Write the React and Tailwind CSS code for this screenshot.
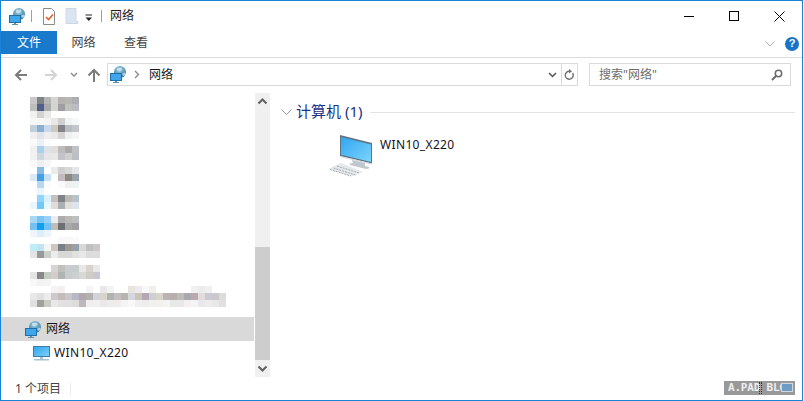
import React from "react";

const MOSAIC = [
  [97, 0, "c8c8c8 7f8385 b5b7b6 d5d5d5 b5b1b1 b8b8b2 adadb3"],
  [104, 0, "bdbdbd 525f8a a8aaac d4d4d2 a09ea0 c0c1bc bbbbc4"],
  [111, 0, "f1f1f1 d2d3ce e9e9e5"],
  [118, 0, "f7f7f7 f6f6f6 f4f4f4 e9e8e6 cfcfcf f0f3f3 f6f8f8"],
  [125, 0, "bfcfdc 8aafd0 cad7ec cdc8c0 858385 b6bcbf c3c5cb"],
  [132, 0, "efefef e0e4ea eeeeef ebe9e8 d6d5d6 eef0f1 f4f5f5"],
  [139, 0, "fafafa eaf0f6 fafbfc"],
  [146, 0, "f1f1f1 a6d2ee dde2e6 e2dfdb bdbdbd ada9a7 bcc2c6"],
  [153, 0, "f1f1f1 ced6e0 e5e7ea e9e8e5 c3c4c7 d0cfcd b9bfc2"],
  [160, 0, "f9f9f9 f0f0f0 f6f6f6"],
  [167, 0, "ffffff 85bde9 ffffff ebebeb cfcfcf d8d8d8 e6e6e8"],
  [174, 0, "dce9f8 40a0e8 c8e0f4 ffffff c3babf 8d8880 9aa4ae"],
  [181, 0, "ffffff b8d8f0 fcfcfc ffffff fafafa f2f0ef eff2f3"],
  [188, 0, "ffffff e8f5fd"],
  [195, 0, "ffffff 90d4ff d8f0fc c8c0bc 7e8488 bdb8b2 b8c4cc"],
  [202, 0, "e8f6fe 70c8fc e8f6fe e0dcd8 acb0b4 e2ded8 dce4ec"],
  [216, 0, "a8d8f4 78c4f4 98d0f8 ececec acacac bcb8b4 bcc0c0"],
  [223, 0, "78c0f4 10a0f0 70c0f4 c4bcb4 6c7074 a8a8a8 a0a0a4"],
  [230, 0, "eef6fc dceef6 eaf4fa"],
  [237, 4, "f8f8f8 f8f8f8 fafafa"],
  [244, 0, "c0ecf8 c0e4f0 f4f4f4 d0c8c0 788088 a0988c 98a0ac d8d8d8 c0c0c0 ccc8c8 ffffff fcffff"],
  [251, 0, "e4e4e4 989898 c8d0c8 ececec d8d8d4 d8d8d4 e0e0dc e8e8e8 dcdcdc dcdcdc"],
  [265, 3, "d8d4d4 c0c0bc c8cccc c8cccc e8e8e8 d8d4cc e8e8e8"],
  [272, 0, "e4e4e4 888888 c4ccc4 d4ccc8 b0b4b4 c8cccc ccd0d0 d8d8d8 d0ccc4 c8c8d4"],
  [279, 0, "f8f8f8 f2f2f2 f4f4f4"],
  [286, 3, "f4f4f4 f4f0f0 ffffff ffffff ffffff f4f4f4 ffffff e8e8e8 f4f4f4 ffffff ffffff e8e4e0 eeeaee f8f8f8 f0f0e8 ffffff ffffff ffffff ffffff ffffff f0f0f0 ececec f0f0f0"],
  [293, 0, "e8e8e8 e0e0e0 ececec ccc8cc c4bcbc c8c8c8 b8b8c4 b0a8ac b4b0b0 d0d4d8 d8d4cc b0b4b0 c4c0c0 b8b4b0 d4d8dc c8c4b8 b4a8b4 ccd0d4 d8d4cc bcb4b4 b8b0b0 bcbcb8 aca8b0 bca8b0 e4dcdc c8ccd0 ccc8cc dcdcdc"],
  [300, 0, "e0e0e0 a0a0a0 c8ccc4 e8e8e8 e4e0e0 e0e0e4 e0dcdc bcb8bc eeeeee f0f0f0 e8e8e8 ececec f0ecec f4f4f4 f8f8f8 f0f0f0 f0ecec f0f0f0 f4f0ec f4f4f4 e8e8e8 e8e8e8 f4f0f0 f4f4f4 e8e8ec ececec e8e8e8 e0e0e0"],
];

function Mosaic() {
  return (
    <svg width="200" height="213" viewBox="30 97 200 213" shapeRendering="crispEdges" className="block">
      {MOSAIC.flatMap(([y, start, cols]) =>
        cols.split(" ").map((c, i) => (
          <rect key={`${y}-${i}`} x={30 + (start + i) * 7} y={y} width="7" height="7" fill={`#${c}`} />
        ))
      )}
    </svg>
  );
}

function NetIcon({ className = "" }) {
  return (
    <svg width="16" height="17" viewBox="0 0 16 17" className={`block shrink-0 ${className}`}>
      <defs>
        <radialGradient id="g" cx="0.45" cy="0.3" r="0.8">
          <stop offset="0" stopColor="#9fd0e6" />
          <stop offset="1" stopColor="#2a6f96" />
        </radialGradient>
      </defs>
      <circle cx="10" cy="6" r="6" fill="url(#g)" />
      <path d="M7 1.500c1.500 1 3 .5 4.500 0l1 2-3 2-2.500-1zM12 8l3-1.500.8 1.500-2 2z" fill="#d6e8ef" opacity="0.75" />
      <rect x="0.500" y="7.500" width="11" height="7" fill="#3fa6ea" stroke="#1f6fa8" />
      <rect x="5" y="15" width="2" height="1" fill="#5d8fb0" />
      <rect x="3" y="16" width="6" height="1" fill="#5d8fb0" />
    </svg>
  );
}

function Nav({ d, color }) {
  return (
    <svg width="16" height="16" viewBox="0 0 16 16" className="block shrink-0">
      <path d={d} fill="none" stroke={color} strokeWidth="2" />
    </svg>
  );
}

function Chevron({ up }) {
  return (
    <svg width="15" height="17" viewBox="0 0 15 17" className="block">
      <path d={up ? "M3.500 10.500l4-4 4 4" : "M3.500 6.500l4 4 4-4"} fill="none" stroke="#606060" strokeWidth="2" />
    </svg>
  );
}

export default function App() {
  const font = "font-['Noto_Sans','Noto_Sans_CJK_SC',sans-serif]";
  return (
    <div className={`w-[803px] h-[401px] bg-white border border-[#1883d7] flex flex-col overflow-hidden text-[12px] text-[#1a1a1a] ${font}`}>
      {/* title bar */}
      <div className="h-[30px] flex items-center shrink-0">
        <NetIcon className="ml-[8px]" />
        <div className="ml-[6px] w-px h-[12px] bg-[#a0a0a0]" />
        <svg width="14" height="17" viewBox="0 0 14 17" className="block ml-[10px]">
          <path d="M1.500 0.500h8l3 3v13h-11z" fill="#fff" stroke="#8a8a8a" />
          <path d="M4 9l2.500 2.500L11 6.500" fill="none" stroke="#e2622a" strokeWidth="1.600" />
        </svg>
        <svg width="14" height="16" viewBox="0 0 14 16" className="block ml-[9px]">
          <path d="M1 0.500h10v13h2v2H1z" fill="#dbe5f2" stroke="#cdd8e6" />
        </svg>
        <svg width="8" height="8" viewBox="0 0 8 8" className="block ml-[6px] mt-[3px]">
          <path d="M0.500 1h6.500" stroke="#222" />
          <path d="M0.500 3.500h6.500L3.800 7z" fill="#222" />
        </svg>
        <div className="ml-[8px] w-px h-[12px] bg-[#a0a0a0]" />
        <span className="ml-[8px] leading-[30px]">网络</span>
        <div className="ml-auto flex items-center h-full">
          <div className="w-[46px] flex justify-center">
            <div className="w-[10px] h-px bg-black" />
          </div>
          <div className="w-[46px] flex justify-center pr-[2px]">
            <div className="w-[10px] h-[10px] border border-black" />
          </div>
          <div className="w-[44px] flex justify-center pr-[2px]">
            <svg width="11" height="11" viewBox="0 0 11 11" className="block">
              <path d="M0.500 0.500l10 10M10.500 0.500l-10 10" stroke="#000" strokeWidth="1" />
            </svg>
          </div>
        </div>
      </div>

      {/* ribbon tabs */}
      <div className="h-[27px] flex items-start border-b border-[#dadbdc] shrink-0">
        <div className="w-[56px] h-[23px] pt-[1px] bg-[#1979ca] text-white flex items-center justify-center">文件</div>
        <div className="w-[53px] h-[23px] pt-[1px] flex items-center justify-center text-[#444]">网络</div>
        <div className="w-[52px] h-[23px] pt-[1px] flex items-center justify-center text-[#444]">查看</div>
        <div className="ml-auto flex items-center h-[23px] pt-[2px]">
          <svg width="10" height="6" viewBox="0 0 10 6" className="block">
            <path d="M0.500 0.500l4.500 4.500 4.500-4.500" fill="none" stroke="#b0b0b0" />
          </svg>
          <div className="w-[14px] h-[14px] mr-[3px] ml-[10px] rounded-full bg-[#1874c8] text-white text-[11px] font-bold flex items-center justify-center leading-none font-['Liberation_Sans',sans-serif]">?</div>
        </div>
      </div>

      {/* address row */}
      <div className="h-[35px] flex items-start pt-[5px] shrink-0">
        <div className="w-[106px] flex items-center pl-[12px] h-[23px]">
          <Nav color="#7b7b7b" d="M14 8H3M8 3L3 8l5 5" />
          <div className="ml-[14px]"><Nav color="#d4d4d4" d="M2 8h11M8 3l5 5-5 5" /></div>
          <svg width="8" height="6" viewBox="0 0 8 6" className="block ml-[11px]">
            <path d="M1 1l3 3 3-3" fill="none" stroke="#8a8a8a" strokeWidth="1.400" />
          </svg>
          <div className="ml-[8px]"><Nav color="#7b7b7b" d="M8 15V3M2.500 8.500L8 3l5.500 5.500" /></div>
        </div>
        <div className="w-[471px] h-[23px] border border-[#d9d9d9] flex items-center">
          <NetIcon className="ml-[2px]" />
          <svg width="6" height="9" viewBox="0 0 6 9" className="block ml-[8px]">
            <path d="M1 1l3.500 3.500L1 8" fill="none" stroke="#8a8a8a" strokeWidth="1.400" />
          </svg>
          <span className="ml-[9px] leading-none">网络</span>
          <div className="ml-auto flex items-center h-full">
            <svg width="9" height="6" viewBox="0 0 9 6" className="block mr-[4px]">
              <path d="M1 1l3.500 3.500L8 1" fill="none" stroke="#555" strokeWidth="1.500" />
            </svg>
            <div className="w-[16px] h-full border-l border-[#d9d9d9] flex items-center justify-center">
              <svg width="11" height="12" viewBox="0 0 11 12" className="block">
                <path d="M8.600 4a4 4 0 1 1-3-1.800" fill="none" stroke="#707070" strokeWidth="1.400" />
                <path d="M5 0l3 2.300L5 4.500z" fill="#707070" />
              </svg>
            </div>
          </div>
        </div>
        <div className="ml-[11px] w-[202px] h-[23px] border border-[#d9d9d9] flex items-center pl-[9px] pr-[7px] text-[#6d6d6d]">
          <span className="leading-none">搜索"网络"</span>
          <svg width="12" height="12" viewBox="0 0 12 12" className="block ml-auto">
            <circle cx="7.500" cy="4.500" r="3.200" fill="none" stroke="#6a6a6a" strokeWidth="1.500" />
            <path d="M5 7l-4 4" stroke="#6a6a6a" strokeWidth="2" />
          </svg>
        </div>
      </div>

      {/* body */}
      <div className="flex-1 min-h-0 flex">
        {/* sidebar */}
        <div className="w-[253px] shrink-0 flex flex-col">
          <div className="pl-[29px] pt-[4px] h-[224px] shrink-0 overflow-hidden">
            <Mosaic />
          </div>
          <div className="h-[24px] bg-[#d9d9d9] flex items-center pl-[24px] shrink-0">
            <NetIcon />
            <span className="ml-[5px]">网络</span>
          </div>
          <div className="h-[24px] flex items-center pl-[32px] shrink-0">
            <svg width="17" height="15" viewBox="0 0 17 15" className="block shrink-0">
              <defs>
                <linearGradient id="s" x1="0" y1="0" x2="1" y2="1">
                  <stop offset="0" stopColor="#2fa6ee" />
                  <stop offset="1" stopColor="#7fd0fa" />
                </linearGradient>
              </defs>
              <rect x="0.500" y="0.500" width="16" height="10" fill="url(#s)" stroke="#3c7ea8" />
              <rect x="7" y="11" width="3" height="2" fill="#a8c2d2" />
              <rect x="1" y="13" width="15" height="1.500" fill="#a8c2d2" />
            </svg>
            <span className="ml-[4px] tracking-[0.35px] text-[#10141c]">WIN10_X220</span>
          </div>
        </div>
        {/* scrollbar */}
        <div className="w-[15px] ml-px shrink-0 h-[284px] bg-[#f0f0f0] flex flex-col">
          <Chevron up />
          <div className="h-[137px] shrink-0" />
          <div className="flex-1 bg-[#cdcdcd]" />
          <Chevron />
        </div>
        {/* content */}
        <div className="flex-1 min-w-0 pl-[11px] pt-[10px]">
          <div className="flex items-center h-[18px]">
            <svg width="11" height="7" viewBox="0 0 11 7" className="block">
              <path d="M0.500 0.500l5 5 5-5" fill="none" stroke="#9a9a9a" />
            </svg>
            <span className="ml-[4px] -mt-[2px] text-[15px] leading-none text-[#1e3287]">计算机 (1)</span>
            <div className="ml-[8px] w-[425px] h-px bg-[#e2e2e2]" />
          </div>
          <div className="flex items-start ml-[47px] mt-[14px]">
            <svg width="44" height="44" viewBox="0 0 44 44" className="block shrink-0">
              <defs>
                <linearGradient id="m" x1="0" y1="0" x2="1" y2="1">
                  <stop offset="0" stopColor="#2ea6f2" />
                  <stop offset="1" stopColor="#7ed4fc" />
                </linearGradient>
              </defs>
              <path d="M12 0l32 8v20.500L12 21z" fill="#5f7383" />
              <path d="M13 2l30 7.500v17.500L13 19.800z" fill="url(#m)" />
              <path d="M12 21l32 7.500v1L12 22z" fill="#cfd6db" />
              <path d="M24 25l13 3v3l4 1v1.500l-3 .5-16-4v-1.500l3-.5z" fill="#c0c8cd" />
              <path d="M13 28l22 9-11 4.500-24-7.500z" fill="#e6e9ec" />
              <path d="M9 31l22 7M5.500 33l22 7M2 34.500l21 6.500" stroke="#a6abb0" strokeWidth="1" strokeDasharray="2 1" />
            </svg>
            <span className="ml-[8px] mt-[1px] tracking-[0.35px] text-[#10141c]">WIN10_X220</span>
          </div>
        </div>
      </div>

      {/* status bar */}
      <div className="h-[22px] flex items-center shrink-0 relative text-[#444]">
        <span className="ml-[14px]">1 个项目</span>
        <div className="ml-[9px] w-px h-[12px] bg-[#ececec]" />
        <div className="absolute right-[7px] top-[3px] w-[71px] h-[14px] bg-[#999] text-[#eeeeee] text-[11px] font-bold leading-[14px] pl-[4px] font-['DejaVu_Sans_Mono',monospace] tracking-[-0.2px] overflow-hidden whitespace-nowrap">
          A.PAD BLOG
          <div className="absolute right-[2px] top-[2px] w-[12px] h-[9px] bg-[#6f9cc4] border border-[#cfd8e0]" />
          <div className="absolute left-[35px] top-[1px] w-[3px] h-[12px] border-x border-dotted border-[#333]" />
        </div>
      </div>
    </div>
  );
}
